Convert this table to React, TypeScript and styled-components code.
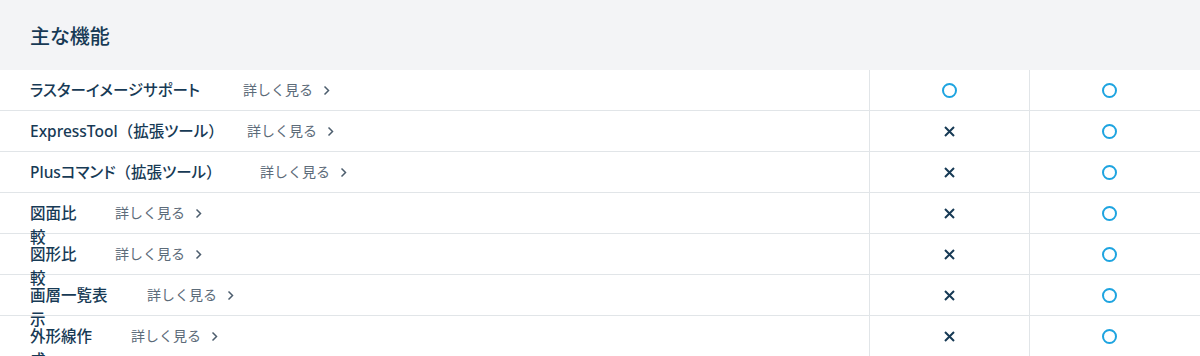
import styled, { createGlobalStyle } from 'styled-components';

const GlobalStyle = createGlobalStyle`
    body {
        margin: 0;
        background: #ffffff;
        font-family: 'Noto Sans', 'Noto Sans CJK JP', sans-serif;
    }
`;

type Mark = 'yes' | 'no';

type Feature = {
    name: string;
    nameWidth: number;
    gap: number;
    lt: Mark;
    full: Mark;
};

const features: Feature[] = [
    { name: 'ラスターイメージサポート', nameWidth: 181, gap: 32, lt: 'yes', full: 'yes' },
    { name: 'ExpressTool（拡張ツール）', nameWidth: 203, gap: 14, lt: 'no', full: 'yes' },
    { name: 'Plusコマンド（拡張ツール）', nameWidth: 203, gap: 27, lt: 'no', full: 'yes' },
    { name: '図面比較', nameWidth: 53, gap: 32, lt: 'no', full: 'yes' },
    { name: '図形比較', nameWidth: 53, gap: 32, lt: 'no', full: 'yes' },
    { name: '画層一覧表示', nameWidth: 85, gap: 32, lt: 'no', full: 'yes' },
    { name: '外形線作成', nameWidth: 69, gap: 32, lt: 'no', full: 'yes' },
];

const Section = styled.section`
    width: 100%;
    height: 356px;
    overflow: hidden;
`;

const Heading = styled.h2`
    margin: 0;
    height: 70px;
    display: flex;
    align-items: center;
    padding: 0 30px;
    background: #f3f4f6;
    color: #173a55;
    font-size: 20px;
    font-weight: 500;
    font-feature-settings: 'palt';
`;

const Row = styled.div`
    display: grid;
    grid-template-columns: 869px 160px 160px 1fr;
    grid-template-rows: 40px;
    border-bottom: 1px solid #e1e5e8;
`;

const NameCell = styled.div`
    display: flex;
    align-items: flex-start;
    padding: 8px 0 0 30px;
    min-height: 0;
`;

const Name = styled.span<{ $w: number; $gap: number }>`
    width: ${({ $w }) => $w}px;
    margin-right: ${({ $gap }) => $gap}px;
    flex-shrink: 0;
    color: #173a55;
    font-size: 15.5px;
    font-weight: 500;
    line-height: 24px;
    font-feature-settings: 'palt';
    word-break: break-all;
`;

// full-width brackets keep their em box, as in the reference
const Paren = styled.span`
    font-feature-settings: normal;
`;

const More = styled.a`
    display: flex;
    align-items: center;
    gap: 10px;
    color: #5c6b79;
    font-size: 14px;
    line-height: 24px;
    text-decoration: none;
    white-space: nowrap;
    cursor: pointer;
`;

const MarkCell = styled.div`
    display: flex;
    align-items: center;
    justify-content: center;
    border-left: 1px solid #e1e5e8;
`;

const Circle = styled.span`
    width: 11px;
    height: 11px;
    border: 2px solid #1ea4e0;
    border-radius: 50%;
`;

function Chevron() {
    return (
        <svg width="7" height="11" viewBox="0 0 7 11" fill="none">
            <polyline
                points="1.5,1.5 5.5,5.5 1.5,9.5"
                stroke="#4c5d6d"
                strokeWidth="1.5"
            />
        </svg>
    );
}

function Cross() {
    return (
        <svg width="11" height="11" viewBox="0 0 11 11">
            <path
                d="M1 1 L10 10 M10 1 L1 10"
                stroke="#173a55"
                strokeWidth="2"
            />
        </svg>
    );
}

function MarkIcon({ mark }: { mark: Mark }) {
    return mark === 'yes' ? <Circle /> : <Cross />;
}

function FeatureName({ text }: { text: string }) {
    const parts = text.split(/([（）])/).filter(Boolean);
    return (
        <>
            {parts.map((p, i) =>
                p === '（' || p === '）' ? <Paren key={i}>{p}</Paren> : p
            )}
        </>
    );
}

export default function App() {
    return (
        <Section>
            <GlobalStyle />
            <Heading>主な機能</Heading>
            {features.map((f) => (
                <Row key={f.name}>
                    <NameCell>
                        <Name $w={f.nameWidth} $gap={f.gap}>
                            <FeatureName text={f.name} />
                        </Name>
                        <More>
                            詳しく見る
                            <Chevron />
                        </More>
                    </NameCell>
                    <MarkCell>
                        <MarkIcon mark={f.lt} />
                    </MarkCell>
                    <MarkCell>
                        <MarkIcon mark={f.full} />
                    </MarkCell>
                    <div />
                </Row>
            ))}
        </Section>
    );
}
